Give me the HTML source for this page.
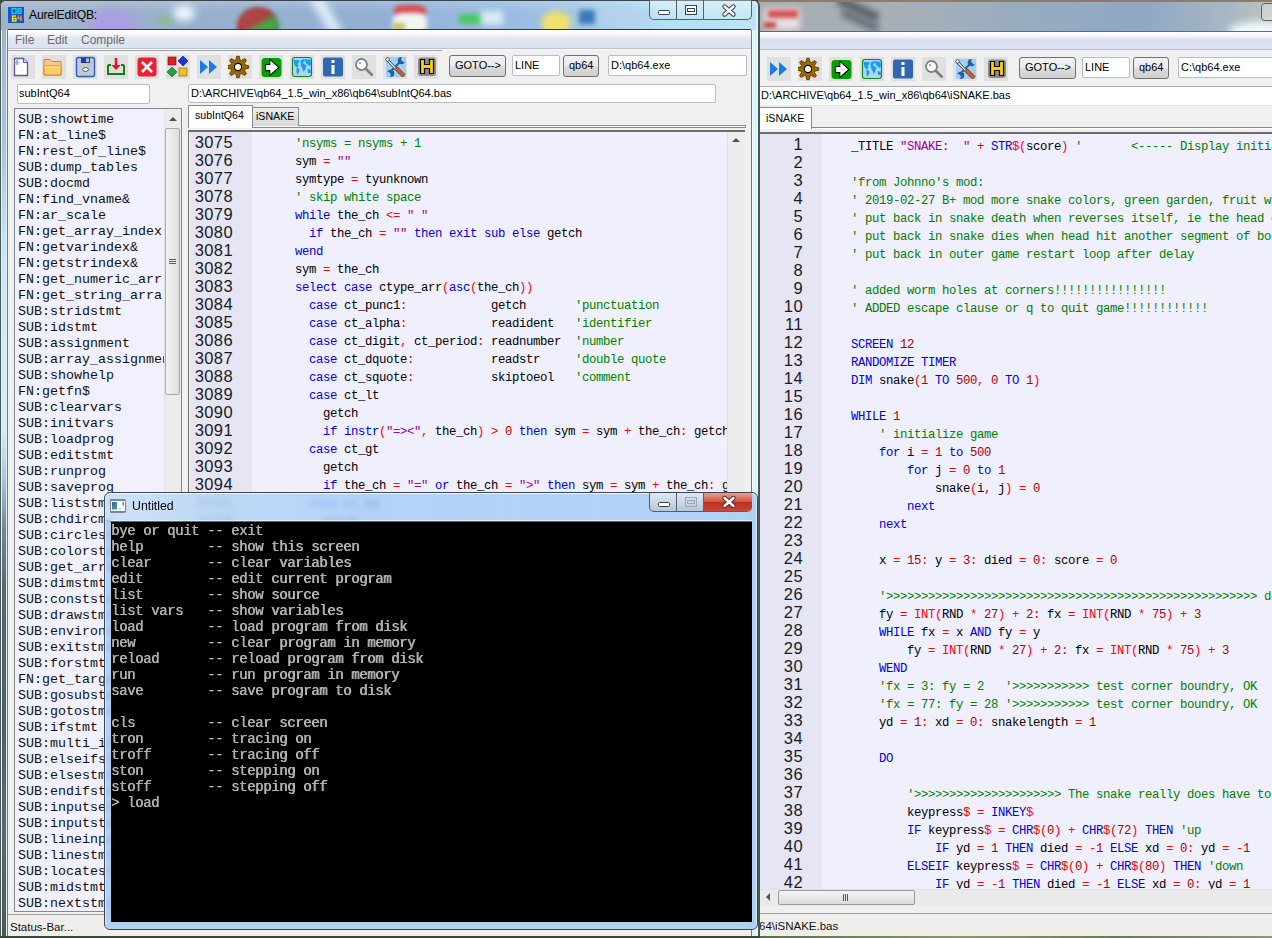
<!DOCTYPE html>
<html><head><meta charset="utf-8">
<style>
*{box-sizing:border-box}
html,body{margin:0;padding:0}
body{width:1272px;height:938px;overflow:hidden;position:relative;background:#3d4a3c;font-family:"Liberation Sans",sans-serif}
.a{position:absolute}
i{font-style:normal}
.k{color:#0000e6}.o{color:#ff0000}.n{color:#b00000}.s{color:#a000a0}.c{color:#008000}
.code{font-family:"Liberation Mono",monospace;font-size:12.3px;letter-spacing:-0.38px;line-height:18px;white-space:pre;color:#000}
.ln{font-family:"Liberation Sans",sans-serif;font-size:16.5px;line-height:18px;text-align:right;color:#1a1a1a;letter-spacing:0.4px}
.btn{position:absolute;width:24px;height:24px;background:#dedede}
.tb{position:absolute;background:#fff;border:1px solid #b8bcc4;border-radius:2px}
.pb{position:absolute;border:1px solid #707070;border-radius:3px;background:linear-gradient(#f2f2f2 0%,#ebebeb 50%,#dddddd 51%,#cfcfcf 100%)}
.menu{font-size:12px;color:#6b6b6b}
.list{font-family:"Liberation Mono",monospace;font-size:13.33px;line-height:16px;white-space:pre;color:#111}
.con{font-family:"Liberation Mono",monospace;font-size:14px;letter-spacing:-0.4px;line-height:16px;white-space:pre;color:#b0b0b0;text-shadow:0.6px 0 0 #b0b0b0}
</style></head><body>

<!-- ================= RIGHT WINDOW (behind) ================= -->
<div class="a" style="left:758px;top:0;width:514px;height:938px;background:#b7c9cf"></div>
<!-- right title bar -->
<div class="a" style="left:758px;top:0;width:514px;height:31px;background:linear-gradient(90deg,#a4acb2 0%,#a8b0b6 25%,#98acc0 50%,#90a8c4 75%,#a8b8c4 92%,#c0c4bc 100%);border-top:2px solid #8c7c6c;overflow:hidden">
  <div class="a" style="left:6px;top:6px;width:36px;height:22px;background:#e8e0e0;filter:blur(3px)"></div>
  <div class="a" style="left:10px;top:8px;width:30px;height:8px;background:#d85050;filter:blur(2px)"></div>
  <div class="a" style="left:6px;top:20px;width:12px;height:6px;background:#c04040;filter:blur(2px)"></div>
  <div class="a" style="left:78px;top:2px;width:44px;height:10px;background:#58606a;filter:blur(3px);transform:rotate(25deg)"></div>
  <div class="a" style="left:82px;top:14px;width:40px;height:9px;background:#68707a;filter:blur(3px);transform:rotate(25deg)"></div>
  <div class="a" style="left:470px;top:20px;width:60px;height:20px;border-radius:50%;background:#f4faff;filter:blur(4px)"></div>
</div>
<div class="a" style="left:1261px;top:3px;width:20px;height:18px;border:1px solid #5a6066;border-radius:4px;background:rgba(255,255,255,0.25)"></div>

<!-- right client -->
<div class="a" style="left:759px;top:31px;width:513px;height:907px;background:#f0f0f0;overflow:hidden">
  <!-- menu -->
  <div class="a" style="left:0;top:0;width:513px;height:1px;background:#5a6a80"></div>
  <div class="a" style="left:0;top:1px;width:513px;height:18px;background:linear-gradient(#ffffff 0%,#f4f5fa 25%,#d8dfee 45%,#dde2f0 100%);border-bottom:1px solid #b8c0d0"></div>
  <div class="btn" style="left:8px;top:26px;background:#e0e0e0"><svg width="24" height="24" viewBox="0 0 24 24" style="position:absolute;left:0;top:0"><path d="M3 5v14l8-7z M12 5v14l8-7z" fill="#1a7ae8"/></svg></div><div class="btn" style="left:39px;top:26px;background:#e0e0e0"><svg width="24" height="24" viewBox="0 0 24 24" style="position:absolute;left:0;top:0"><path d="M16.86 9.80 L20.73 10.81 L20.73 13.19 L16.86 14.20 L16.40 15.30 L18.43 18.75 L16.75 20.43 L13.30 18.40 L12.20 18.86 L11.19 22.73 L8.81 22.73 L7.80 18.86 L6.70 18.40 L3.25 20.43 L1.57 18.75 L3.60 15.30 L3.14 14.20 L-0.73 13.19 L-0.73 10.81 L3.14 9.80 L3.60 8.70 L1.57 5.25 L3.25 3.57 L6.70 5.60 L7.80 5.14 L8.81 1.27 L11.19 1.27 L12.20 5.14 L13.30 5.60 L16.75 3.57 L18.43 5.25 L16.40 8.70Z" fill="#9a6600" stroke="#5a3800" stroke-width="0.9" stroke-linejoin="round"/><circle cx="10" cy="12" r="3.6" fill="#fff" stroke="#000" stroke-width="1.1"/></svg></div><div class="btn" style="left:70px;top:26px;background:#e0e0e0"><svg width="24" height="24" viewBox="0 0 24 24" style="position:absolute;left:0;top:0"><rect x="2.5" y="3" width="20" height="19" rx="3.5" fill="#00a000"/><path d="M6.5 9.5h4.3v-5.3l9 8.2-9 8.2v-5h-4.3z" fill="#fff" stroke="#000" stroke-width="1.1" stroke-linejoin="miter"/></svg></div><div class="btn" style="left:101px;top:26px;background:#dedede"><svg width="24" height="24" viewBox="0 0 24 24" style="position:absolute;left:0;top:0"><rect x="2.5" y="2.5" width="19" height="19" rx="2.5" fill="#b0d4f6" stroke="#108810" stroke-width="1.1"/><path d="M3.5 5h5.5l0.5 2-2 1.5 1 2-1 2-2-1-1.5-2.5zM6.5 12.5l3 1.5-0.5 3-2 3-0.5-4zM11 5l3-1 1 2-2 1 0.5 2 3 1-1 4-2 3-1-3-1.5-3-0.5-3zM14.5 4l6 1 0.5 4-1 2-2-1-2-2zM17.5 14l3 0.5 0.5 3.5-3 0z" fill="#10a0f8"/></svg></div><div class="btn" style="left:132px;top:26px;background:#e0e0e0"><svg width="24" height="24" viewBox="0 0 24 24" style="position:absolute;left:0;top:0"><rect x="2" y="2.5" width="20" height="19" rx="2" fill="#3068b0"/><rect x="10.5" y="5" width="3" height="3" fill="#fff"/><rect x="10.5" y="10" width="3" height="9" fill="#fff"/></svg></div><div class="btn" style="left:163px;top:26px;background:#e0e0e0"><svg width="24" height="24" viewBox="0 0 24 24" style="position:absolute;left:0;top:0"><circle cx="9.5" cy="9.5" r="5.5" fill="#fff" stroke="#808080" stroke-width="1.8"/><path d="M13.5 13.5l7 7" stroke="#808080" stroke-width="2.6"/><circle cx="8" cy="8" r="1" fill="#4aa0f0"/></svg></div><div class="btn" style="left:194px;top:26px;background:#e4e2e0"><svg width="24" height="24" viewBox="0 0 24 24" style="position:absolute;left:0;top:0"><rect x="3" y="2" width="20" height="20" fill="#a0d0fa"/><path d="M6 18l12-12" stroke="#2a6098" stroke-width="2"/><circle cx="18.3" cy="5.7" r="3.6" fill="#2a6098"/><circle cx="7.7" cy="18.3" r="3.6" fill="#2a6098"/><path d="M19 2l4 0 0 4-2.5 1.2-2.5-2.5zM7 22l-4 0 0-4 2.5-1.2 2.5 2.5z" fill="#a0d0fa"/><path d="M4 4.5l8.5 9" stroke="#303030" stroke-width="2.6" stroke-linecap="round"/><path d="M4 4.5l8.5 9" stroke="#fff" stroke-width="1.2" stroke-linecap="round"/><circle cx="4.5" cy="4.5" r="1.8" fill="#fff" stroke="#303030" stroke-width="0.8"/><path d="M12 14.5l2.5-2.5 7.5 7.5-2.5 2.5z" fill="#f06010" stroke="#404040" stroke-width="1"/><path d="M15 14.5l4.5 4.5M14 15.5l4.5 4.5" stroke="#a83808" stroke-width="0.6" stroke-dasharray="1 1"/></svg></div><div class="btn" style="left:225px;top:26px;background:#e0e0e0"><svg width="24" height="24" viewBox="0 0 24 24" style="position:absolute;left:0;top:0"><rect x="4" y="2.5" width="18" height="18.5" rx="3" fill="#8a8a8a"/><path d="M6.5 4.5h4v5h5v-5h4v14h-4v-5h-5v5h-4z" fill="#ffd000" stroke="#000" stroke-width="1.2" stroke-linejoin="miter"/></svg></div><div class="pb" style="left:260px;top:26px;width:57px;height:22px"></div><div class="a" style="left:266px;top:30px;font-size:11px;color:#000;white-space:pre">GOTO--&gt;</div><div class="tb" style="left:323px;top:26px;width:48px;height:21px"></div><div class="a" style="left:326px;top:30px;font-size:11px;color:#000">LINE</div><div class="pb" style="left:374px;top:26px;width:36px;height:22px"></div><div class="a" style="left:380px;top:30px;font-size:11px;color:#000">qb64</div><div class="tb" style="left:419px;top:26px;width:200px;height:21px"></div><div class="a" style="left:422px;top:30px;font-size:11px;color:#000;white-space:pre">C:\qb64.exe</div>
  <!-- path field -->
  <div class="a" style="left:0;top:55px;width:513px;height:20px;background:#fff;border-top:1px solid #a8acb4;border-bottom:1px solid #dde3ea"></div>
  <div class="a" style="left:2px;top:58px;font-size:11px;color:#000;white-space:pre">D:\ARCHIVE\qb64_1.5_win_x86\qb64\iSNAKE.bas</div>
  <!-- tab -->
  <div class="a" style="left:0;top:96px;width:513px;height:2px;background:#8a8a8a;border-bottom:1px solid #fff"></div>
  <div class="a" style="left:0;top:76px;width:53px;height:22px;background:#fff;border:1px solid #8a8a8a;border-bottom:none"></div>
  <div class="a" style="left:7px;top:81px;font-size:10.6px;color:#000">iSNAKE</div>
  <!-- code area -->
  <div class="a" style="left:0;top:101px;width:513px;height:757px;background:#f0effd;border-top:2px solid #6d6d6d;border-left:1px solid #6d6d6d;overflow:hidden">
    <div class="a" style="left:0;top:0;width:62px;height:757px;background:#e6e5f3"></div>
    <div class="a ln" style="left:0;top:1px;width:43px"><div>1</div><div>2</div><div>3</div><div>4</div><div>5</div><div>6</div><div>7</div><div>8</div><div>9</div><div>10</div><div>11</div><div>12</div><div>13</div><div>14</div><div>15</div><div>16</div><div>17</div><div>18</div><div>19</div><div>20</div><div>21</div><div>22</div><div>23</div><div>24</div><div>25</div><div>26</div><div>27</div><div>28</div><div>29</div><div>30</div><div>31</div><div>32</div><div>33</div><div>34</div><div>35</div><div>36</div><div>37</div><div>38</div><div>39</div><div>40</div><div>41</div><div>42</div><div>43</div></div>
    <div class="a code" style="left:63px;top:3.5px"><div>    _TITLE <i class=s>&quot;SNAKE:  &quot;</i> <i class=o>+</i> <i class=k>STR</i><i class=o>$</i><i class=o>(</i>score<i class=o>)</i> <i class=c>&#x27;       &lt;----- Display initial score in title</i></div><div>&nbsp;</div><div>    <i class=c>&#x27;from Johnno&#x27;s mod:</i></div><div>    <i class=c>&#x27; 2019-02-27 B+ mod more snake colors, green garden, fruit when eaten</i></div><div>    <i class=c>&#x27; put back in snake death when reverses itself, ie the head can&#x27;t go</i></div><div>    <i class=c>&#x27; put back in snake dies when head hit another segment of body</i></div><div>    <i class=c>&#x27; put back in outer game restart loop after delay</i></div><div>&nbsp;</div><div>    <i class=c>&#x27; added worm holes at corners!!!!!!!!!!!!!!!!</i></div><div>    <i class=c>&#x27; ADDED escape clause or q to quit game!!!!!!!!!!!!</i></div><div>&nbsp;</div><div>    <i class=k>SCREEN</i> <i class=n>12</i></div><div>    <i class=k>RANDOMIZE</i> <i class=k>TIMER</i></div><div>    <i class=k>DIM</i> snake<i class=o>(</i><i class=n>1</i> <i class=k>TO</i> <i class=n>500</i><i class=o>,</i> <i class=n>0</i> <i class=k>TO</i> <i class=n>1</i><i class=o>)</i></div><div>&nbsp;</div><div>    <i class=k>WHILE</i> <i class=n>1</i></div><div>        <i class=c>&#x27; initialize game</i></div><div>        <i class=k>for</i> i <i class=o>=</i> <i class=n>1</i> <i class=k>to</i> <i class=n>500</i></div><div>            <i class=k>for</i> j <i class=o>=</i> <i class=n>0</i> <i class=k>to</i> <i class=n>1</i></div><div>                snake<i class=o>(</i>i<i class=o>,</i> j<i class=o>)</i> <i class=o>=</i> <i class=n>0</i></div><div>            <i class=k>next</i></div><div>        <i class=k>next</i></div><div>&nbsp;</div><div>        x <i class=o>=</i> <i class=n>15</i><i class=o>:</i> y <i class=o>=</i> <i class=n>3</i><i class=o>:</i> died <i class=o>=</i> <i class=n>0</i><i class=o>:</i> score <i class=o>=</i> <i class=n>0</i></div><div>&nbsp;</div><div>        <i class=c>&#x27;&gt;&gt;&gt;&gt;&gt;&gt;&gt;&gt;&gt;&gt;&gt;&gt;&gt;&gt;&gt;&gt;&gt;&gt;&gt;&gt;&gt;&gt;&gt;&gt;&gt;&gt;&gt;&gt;&gt;&gt;&gt;&gt;&gt;&gt;&gt;&gt;&gt;&gt;&gt;&gt;&gt;&gt;&gt;&gt;&gt;&gt;&gt;&gt;&gt;&gt;&gt;&gt;&gt; delay</i></div><div>        fy <i class=o>=</i> <i class=o>INT</i><i class=o>(</i>RND <i class=o>*</i> <i class=n>27</i><i class=o>)</i> <i class=o>+</i> <i class=n>2</i><i class=o>:</i> fx <i class=o>=</i> <i class=o>INT</i><i class=o>(</i>RND <i class=o>*</i> <i class=n>75</i><i class=o>)</i> <i class=o>+</i> <i class=n>3</i></div><div>        <i class=k>WHILE</i> fx <i class=o>=</i> x <i class=k>AND</i> fy <i class=o>=</i> y</div><div>            fy <i class=o>=</i> <i class=o>INT</i><i class=o>(</i>RND <i class=o>*</i> <i class=n>27</i><i class=o>)</i> <i class=o>+</i> <i class=n>2</i><i class=o>:</i> fx <i class=o>=</i> <i class=o>INT</i><i class=o>(</i>RND <i class=o>*</i> <i class=n>75</i><i class=o>)</i> <i class=o>+</i> <i class=n>3</i></div><div>        <i class=k>WEND</i></div><div>        <i class=c>&#x27;fx = 3: fy = 2   &#x27;&gt;&gt;&gt;&gt;&gt;&gt;&gt;&gt;&gt;&gt;&gt; test corner boundry, OK</i></div><div>        <i class=c>&#x27;fx = 77: fy = 28 &#x27;&gt;&gt;&gt;&gt;&gt;&gt;&gt;&gt;&gt;&gt;&gt; test corner boundry, OK</i></div><div>        yd <i class=o>=</i> <i class=n>1</i><i class=o>:</i> xd <i class=o>=</i> <i class=n>0</i><i class=o>:</i> snakelength <i class=o>=</i> <i class=n>1</i></div><div>&nbsp;</div><div>        <i class=k>DO</i></div><div>&nbsp;</div><div>            <i class=c>&#x27;&gt;&gt;&gt;&gt;&gt;&gt;&gt;&gt;&gt;&gt;&gt;&gt;&gt;&gt;&gt;&gt;&gt;&gt;&gt;&gt;&gt; The snake really does have to move</i></div><div>            keypress<i class=o>$</i> <i class=o>=</i> <i class=k>INKEY</i><i class=o>$</i></div><div>            <i class=k>IF</i> keypress<i class=o>$</i> <i class=o>=</i> <i class=k>CHR</i><i class=o>$</i><i class=o>(</i><i class=n>0</i><i class=o>)</i> <i class=o>+</i> <i class=k>CHR</i><i class=o>$</i><i class=o>(</i><i class=n>72</i><i class=o>)</i> <i class=k>THEN</i> <i class=c>&#x27;up</i></div><div>                <i class=k>IF</i> yd <i class=o>=</i> <i class=n>1</i> <i class=k>THEN</i> died <i class=o>=</i> <i class=o>-</i><i class=n>1</i> <i class=k>ELSE</i> xd <i class=o>=</i> <i class=n>0</i><i class=o>:</i> yd <i class=o>=</i> <i class=o>-</i><i class=n>1</i></div><div>            <i class=k>ELSEIF</i> keypress<i class=o>$</i> <i class=o>=</i> <i class=k>CHR</i><i class=o>$</i><i class=o>(</i><i class=n>0</i><i class=o>)</i> <i class=o>+</i> <i class=k>CHR</i><i class=o>$</i><i class=o>(</i><i class=n>80</i><i class=o>)</i> <i class=k>THEN</i> <i class=c>&#x27;down</i></div><div>                <i class=k>IF</i> yd <i class=o>=</i> <i class=o>-</i><i class=n>1</i> <i class=k>THEN</i> died <i class=o>=</i> <i class=o>-</i><i class=n>1</i> <i class=k>ELSE</i> xd <i class=o>=</i> <i class=n>0</i><i class=o>:</i> yd <i class=o>=</i> <i class=n>1</i></div><div>            <i class=k>ELSEIF</i> keypress<i class=o>$</i> <i class=o>=</i> <i class=k>CHR</i><i class=o>$</i><i class=o>(</i><i class=n>0</i><i class=o>)</i> <i class=o>+</i> <i class=k>CHR</i><i class=o>$</i><i class=o>(</i><i class=n>75</i><i class=o>)</i> <i class=k>THEN</i> <i class=c>&#x27;left</i></div></div>
  </div>
  <!-- hscroll -->
  <div class="a" style="left:0;top:858px;width:513px;height:17px;background:#eaeaea;border-top:1px solid #e0e0e0"></div>
  <div class="a" style="left:7px;top:862px;width:0;height:0;border-top:4px solid transparent;border-bottom:4px solid transparent;border-right:4px solid #505050"></div>
  <div class="a" style="left:19px;top:859px;width:137px;height:15px;border:1px solid #9a9a9a;border-radius:2px;background:linear-gradient(#f4f4f4,#dcdcdc)"></div>
  <div class="a" style="left:84px;top:863px;width:1px;height:7px;background:#555;box-shadow:2px 0 0 #555,4px 0 0 #555"></div>
  <div class="a" style="left:0;top:882px;width:513px;height:1px;background:#a0a0a0"></div>
  <div class="a" style="left:0;top:883px;width:513px;height:24px;background:#f0eeeb"></div>
  <div class="a" style="left:0;top:889px;font-size:11.5px;color:#111;white-space:pre">64\iSNAKE.bas</div>
</div>

<div class="a" style="left:759px;top:936px;width:513px;height:2px;background:linear-gradient(90deg,#5a7048,#8a9868 40%,#6a7a50 70%,#8c9870)"></div>
<!-- ================= LEFT WINDOW ================= -->
<div class="a" style="left:0;top:0;width:760px;height:938px;background:#d8f2f6;border-left:1px solid #4a5656;border-right:2px solid #4a5558;border-top:1px solid #3a4448;border-radius:6px 6px 0 0"></div>
<div class="a" style="left:1px;top:28px;width:6px;height:910px;background:linear-gradient(180deg,#9cb4cc 0px,#a8c4dc 120px,#c4e8f2 220px,#ccf2f6 400px,#a8c8d8 450px,#708898 500px,#56666e 560px,#4e5e66 700px,#586a70 800px,#44544c 938px);border-left:1px solid #e8f4f8;border-right:1px solid #e8f4f8"></div>
<div class="a" style="left:752px;top:28px;width:6px;height:910px;background:#d8f6fa;border-left:1px solid #f4fcff;border-right:1px solid #f4fcff"></div>
<!-- title glass -->
<div class="a" style="left:1px;top:1px;width:755px;height:29px;border-radius:6px 6px 0 0;background:linear-gradient(90deg,#a2b4c8 0%,#98b0cc 25%,#92b0d4 50%,#9cc0e4 72%,#b4e0f4 88%,#bce4f4 100%);overflow:hidden">
  <div class="a" style="left:0;top:0;width:755px;height:12px;background:linear-gradient(rgba(255,255,255,0.18),rgba(255,255,255,0))"></div>
  <div class="a" style="left:88px;top:8px;width:48px;height:34px;border-radius:50%;background:#ac9ce4;filter:blur(5px)"></div>
  <div class="a" style="left:172px;top:4px;width:22px;height:16px;border-radius:50%;background:#eef8ff;filter:blur(4px)"></div>
  <div class="a" style="left:158px;top:16px;width:14px;height:8px;border-radius:50%;background:#80c080;filter:blur(3px)"></div>
  <div class="a" style="left:236px;top:6px;width:42px;height:40px;border-radius:50%;background:linear-gradient(150deg,#c05050 0%,#b04040 40%,#48a848 52%,#40a040 100%);box-shadow:inset 0 0 5px rgba(60,30,30,0.6);filter:blur(2px)"></div>
  <div class="a" style="left:305px;top:-4px;width:40px;height:36px;background:linear-gradient(60deg,rgba(220,240,255,0) 30%,#e8f6ff 50%,rgba(220,240,255,0) 70%);filter:blur(3px)"></div>
  <div class="a" style="left:393px;top:4px;width:32px;height:10px;border-radius:40% 40% 10% 10%;background:#d84848;filter:blur(2px)"></div>
  <div class="a" style="left:392px;top:12px;width:34px;height:20px;border-radius:30%;background:#f4f4f0;filter:blur(2.5px)"></div>
  <div class="a" style="left:392px;top:22px;width:12px;height:8px;background:#c8c070;filter:blur(2px)"></div>
  <div class="a" style="left:457px;top:13px;width:26px;height:10px;border-radius:5px;background:#48c868;filter:blur(2px)"></div>
  <div class="a" style="left:480px;top:10px;width:22px;height:14px;background:#d8ecf4;filter:blur(3px)"></div>
  <div class="a" style="left:540px;top:10px;width:30px;height:24px;border-radius:50%;background:#f0e070;filter:blur(3px)"></div>
  <div class="a" style="left:578px;top:9px;width:16px;height:14px;background:#3a78b8;filter:blur(2.5px)"></div>
  <div class="a" style="left:600px;top:10px;width:50px;height:12px;background:#b8d0ec;filter:blur(4px)"></div>
</div>
<!-- app icon -->
<svg class="a" style="left:8px;top:7px" width="16" height="16" viewBox="0 0 16 16">
<rect width="16" height="16" fill="#1458c8"/>
<g fill="none" stroke="#28d0f0" stroke-width="1.2"><rect x="4" y="1.6" width="4" height="4.8"/><path d="M10 1.6h3v4.8h-3zM10 4h3"/></g><rect x="7.5" y="5.6" width="1" height="1" fill="#28d0f0"/>
<path d="M8 9h-3.5v5h3.5v-2.5h-3.5" fill="none" stroke="#f8e020" stroke-width="1.3"/>
<path d="M10.2 8.5v3h3M13 8.5v5.5" fill="none" stroke="#e8a040" stroke-width="1.3"/>
</svg>
<div class="a" style="left:29px;top:8px;font-size:12.2px;letter-spacing:-0.2px;color:#000;white-space:pre">AurelEditQB:</div>
<!-- caption buttons -->
<div class="a" style="left:649px;top:0;width:103px;height:20px;border:1px solid #52606a;border-top:none;border-radius:0 0 5px 5px;background:linear-gradient(rgba(255,255,255,0.35),rgba(255,255,255,0.15))"></div>
<div class="a" style="left:676px;top:0;width:1px;height:19px;background:#52606a"></div>
<div class="a" style="left:703px;top:0;width:1px;height:19px;background:#52606a"></div>
<svg class="a" style="left:649px;top:0" width="104" height="20" viewBox="0 0 104 20">
<rect x="9.5" y="10.5" width="11" height="4" rx="1" fill="#fff" stroke="#3a4048" stroke-width="1"/>
<rect x="36.5" y="5.5" width="11" height="9" fill="#fff" stroke="#3a4048" stroke-width="1"/><rect x="38.5" y="8.5" width="7" height="3" fill="none" stroke="#3a4048" stroke-width="1"/>
<path d="M75.5 6.5L84.5 14.5M84.5 6.5L75.5 14.5" stroke="#3a4048" stroke-width="4.4" stroke-linecap="round"/><path d="M75.5 6.5L84.5 14.5M84.5 6.5L75.5 14.5" stroke="#fff" stroke-width="2.4" stroke-linecap="round"/>
</svg>
<!-- left client -->
<div class="a" style="left:7px;top:30px;width:1px;height:906px;background:#6a7880"></div><div class="a" style="left:751px;top:30px;width:1px;height:906px;background:#6a7880"></div>
<div class="a" style="left:8px;top:29px;width:743px;height:1px;background:#2c3a58"></div>
<div class="a" style="left:8px;top:30px;width:743px;height:906px;background:#f0f0f0;overflow:hidden">
  <!-- menu -->
  <div class="a" style="left:0;top:0;width:743px;height:19px;background:linear-gradient(#ffffff 0%,#f4f5fa 25%,#e2e6f2 45%,#dde2f0 100%);border-bottom:1px solid #bcc4d4"></div>
  <div class="a" style="left:0;top:19px;width:743px;height:1px;background:#fafafa"></div>
  <div class="a" style="left:0;top:20px;width:434px;height:1px;background:#a0a4ac"></div>
  <div class="a menu" style="left:7px;top:3px">File</div>
  <div class="a menu" style="left:39px;top:3px">Edit</div>
  <div class="a menu" style="left:73px;top:3px">Compile</div>
  <div class="btn" style="left:3px;top:25px;background:#e0e0e0"><svg width="24" height="24" viewBox="0 0 24 24" style="position:absolute;left:0;top:0"><path d="M3.5 3.5h9l4 4v13h-13z" fill="#fff" stroke="#5a5a9a" stroke-width="1.3"/><path d="M12.5 3.5v4h4" fill="#dde" stroke="#5a5a9a" stroke-width="1"/><path d="M6 5v5M3.5 7.5h5" stroke="#7ab0e8" stroke-width="1.6"/></svg></div><div class="btn" style="left:34px;top:25px;background:#e0e0e0"><svg width="24" height="24" viewBox="0 0 24 24" style="position:absolute;left:0;top:0"><path d="M2 4.5h6l2 2h9v13.5h-17z" fill="#f8c890" stroke="#e08020" stroke-width="1"/><path d="M2 11h17v9h-17z" fill="#fcd060" stroke="#e08020" stroke-width="1"/><path d="M2 12h17" stroke="#fff0a0" stroke-width="1"/></svg></div><div class="btn" style="left:65px;top:25px;background:#e0e0e0"><svg width="24" height="24" viewBox="0 0 24 24" style="position:absolute;left:0;top:0"><rect x="3.5" y="2.5" width="18" height="19" rx="2" fill="#c8c8cc" stroke="#2060d0" stroke-width="1.4"/><rect x="8" y="3" width="9" height="5" fill="#2040a0"/><rect x="13" y="3.5" width="3" height="3.5" fill="#c0c0c0"/><ellipse cx="12.5" cy="14.5" rx="3" ry="2" fill="#fff" stroke="#2060d0" stroke-width="1"/></svg></div><div class="btn" style="left:96px;top:25px;background:#e0e0e0"><svg width="24" height="24" viewBox="0 0 24 24" style="position:absolute;left:0;top:0"><path d="M4 10v9h16v-9" fill="none" stroke="#108010" stroke-width="2"/><path d="M4 10h3M17 10h3" stroke="#108010" stroke-width="2"/><path d="M12 3v8" stroke="#ee1010" stroke-width="2.4"/><path d="M7.5 10l4.5 5 4.5-5z" fill="#ee1010"/></svg></div><div class="btn" style="left:127px;top:25px;background:#e0e0e0"><svg width="24" height="24" viewBox="0 0 24 24" style="position:absolute;left:0;top:0"><rect x="2.5" y="2.5" width="19" height="19" rx="3" fill="#ee2030"/><path d="M7 7l10 10M17 7l-10 10" stroke="#fff" stroke-width="2.6"/></svg></div><div class="btn" style="left:158px;top:25px;background:#e0e0e0"><svg width="24" height="24" viewBox="0 0 24 24" style="position:absolute;left:0;top:0"><rect x="2" y="2" width="8" height="8" fill="#e02020" stroke="#701010" stroke-width="0.6"/><path d="M17 1l5 5-5 5-5-5z" fill="#2030e0" stroke="#101070" stroke-width="0.6"/><path d="M6 12l5 5-5 5-5-5z" fill="#20a040" stroke="#105020" stroke-width="0.6"/><rect x="13" y="13" width="8" height="8" fill="#f0c020" stroke="#806010" stroke-width="0.6"/></svg></div><div class="btn" style="left:189px;top:25px;background:#e0e0e0"><svg width="24" height="24" viewBox="0 0 24 24" style="position:absolute;left:0;top:0"><path d="M3 5v14l8-7z M12 5v14l8-7z" fill="#1a7ae8"/></svg></div><div class="btn" style="left:220px;top:25px;background:#e0e0e0"><svg width="24" height="24" viewBox="0 0 24 24" style="position:absolute;left:0;top:0"><path d="M16.86 9.80 L20.73 10.81 L20.73 13.19 L16.86 14.20 L16.40 15.30 L18.43 18.75 L16.75 20.43 L13.30 18.40 L12.20 18.86 L11.19 22.73 L8.81 22.73 L7.80 18.86 L6.70 18.40 L3.25 20.43 L1.57 18.75 L3.60 15.30 L3.14 14.20 L-0.73 13.19 L-0.73 10.81 L3.14 9.80 L3.60 8.70 L1.57 5.25 L3.25 3.57 L6.70 5.60 L7.80 5.14 L8.81 1.27 L11.19 1.27 L12.20 5.14 L13.30 5.60 L16.75 3.57 L18.43 5.25 L16.40 8.70Z" fill="#9a6600" stroke="#5a3800" stroke-width="0.9" stroke-linejoin="round"/><circle cx="10" cy="12" r="3.6" fill="#fff" stroke="#000" stroke-width="1.1"/></svg></div><div class="btn" style="left:251px;top:25px;background:#e0e0e0"><svg width="24" height="24" viewBox="0 0 24 24" style="position:absolute;left:0;top:0"><rect x="2.5" y="3" width="20" height="19" rx="3.5" fill="#00a000"/><path d="M6.5 9.5h4.3v-5.3l9 8.2-9 8.2v-5h-4.3z" fill="#fff" stroke="#000" stroke-width="1.1" stroke-linejoin="miter"/></svg></div><div class="btn" style="left:282px;top:25px;background:#dedede"><svg width="24" height="24" viewBox="0 0 24 24" style="position:absolute;left:0;top:0"><rect x="2.5" y="2.5" width="19" height="19" rx="2.5" fill="#b0d4f6" stroke="#108810" stroke-width="1.1"/><path d="M3.5 5h5.5l0.5 2-2 1.5 1 2-1 2-2-1-1.5-2.5zM6.5 12.5l3 1.5-0.5 3-2 3-0.5-4zM11 5l3-1 1 2-2 1 0.5 2 3 1-1 4-2 3-1-3-1.5-3-0.5-3zM14.5 4l6 1 0.5 4-1 2-2-1-2-2zM17.5 14l3 0.5 0.5 3.5-3 0z" fill="#10a0f8"/></svg></div><div class="btn" style="left:313px;top:25px;background:#e0e0e0"><svg width="24" height="24" viewBox="0 0 24 24" style="position:absolute;left:0;top:0"><rect x="2" y="2.5" width="20" height="19" rx="2" fill="#3068b0"/><rect x="10.5" y="5" width="3" height="3" fill="#fff"/><rect x="10.5" y="10" width="3" height="9" fill="#fff"/></svg></div><div class="btn" style="left:344px;top:25px;background:#e0e0e0"><svg width="24" height="24" viewBox="0 0 24 24" style="position:absolute;left:0;top:0"><circle cx="9.5" cy="9.5" r="5.5" fill="#fff" stroke="#808080" stroke-width="1.8"/><path d="M13.5 13.5l7 7" stroke="#808080" stroke-width="2.6"/><circle cx="8" cy="8" r="1" fill="#4aa0f0"/></svg></div><div class="btn" style="left:375px;top:25px;background:#e4e2e0"><svg width="24" height="24" viewBox="0 0 24 24" style="position:absolute;left:0;top:0"><rect x="3" y="2" width="20" height="20" fill="#a0d0fa"/><path d="M6 18l12-12" stroke="#2a6098" stroke-width="2"/><circle cx="18.3" cy="5.7" r="3.6" fill="#2a6098"/><circle cx="7.7" cy="18.3" r="3.6" fill="#2a6098"/><path d="M19 2l4 0 0 4-2.5 1.2-2.5-2.5zM7 22l-4 0 0-4 2.5-1.2 2.5 2.5z" fill="#a0d0fa"/><path d="M4 4.5l8.5 9" stroke="#303030" stroke-width="2.6" stroke-linecap="round"/><path d="M4 4.5l8.5 9" stroke="#fff" stroke-width="1.2" stroke-linecap="round"/><circle cx="4.5" cy="4.5" r="1.8" fill="#fff" stroke="#303030" stroke-width="0.8"/><path d="M12 14.5l2.5-2.5 7.5 7.5-2.5 2.5z" fill="#f06010" stroke="#404040" stroke-width="1"/><path d="M15 14.5l4.5 4.5M14 15.5l4.5 4.5" stroke="#a83808" stroke-width="0.6" stroke-dasharray="1 1"/></svg></div><div class="btn" style="left:406px;top:25px;background:#e0e0e0"><svg width="24" height="24" viewBox="0 0 24 24" style="position:absolute;left:0;top:0"><rect x="4" y="2.5" width="18" height="18.5" rx="3" fill="#8a8a8a"/><path d="M6.5 4.5h4v5h5v-5h4v14h-4v-5h-5v5h-4z" fill="#ffd000" stroke="#000" stroke-width="1.2" stroke-linejoin="miter"/></svg></div><div class="pb" style="left:441px;top:25px;width:57px;height:22px"></div><div class="a" style="left:447px;top:29px;font-size:11px;color:#000;white-space:pre">GOTO--&gt;</div><div class="tb" style="left:504px;top:25px;width:48px;height:21px"></div><div class="a" style="left:507px;top:29px;font-size:11px;color:#000">LINE</div><div class="pb" style="left:555px;top:25px;width:36px;height:22px"></div><div class="a" style="left:561px;top:29px;font-size:11px;color:#000">qb64</div><div class="tb" style="left:600px;top:25px;width:139px;height:21px"></div><div class="a" style="left:603px;top:29px;font-size:11px;color:#000;white-space:pre">D:\qb64.exe</div>
  <!-- name box -->
  <div class="tb" style="left:9px;top:54px;width:133px;height:20px"></div>
  <div class="a" style="left:11px;top:57px;font-size:11px;color:#000">subIntQ64</div>
  <!-- path box -->
  <div class="tb" style="left:180px;top:54px;width:528px;height:19px"></div>
  <div class="a" style="left:183px;top:57px;font-size:11px;color:#000;white-space:pre">D:\ARCHIVE\qb64_1.5_win_x86\qb64\subIntQ64.bas</div>
  <!-- listbox -->
  <div class="a" style="left:6px;top:78px;width:168px;height:804px;background:#f0f0fe;border:1px solid #828790;overflow:hidden">
    <div class="a list" style="left:3px;top:3px"><div>SUB:showtime</div><div>FN:at_line$</div><div>FN:rest_of_line$</div><div>SUB:dump_tables</div><div>SUB:docmd</div><div>FN:find_vname&amp;</div><div>FN:ar_scale</div><div>FN:get_array_index</div><div>FN:getvarindex&amp;</div><div>FN:getstrindex&amp;</div><div>FN:get_numeric_arr</div><div>FN:get_string_arra</div><div>SUB:stridstmt</div><div>SUB:idstmt</div><div>SUB:assignment</div><div>SUB:array_assignmen</div><div>SUB:showhelp</div><div>FN:getfn$</div><div>SUB:clearvars</div><div>SUB:initvars</div><div>SUB:loadprog</div><div>SUB:editstmt</div><div>SUB:runprog</div><div>SUB:saveprog</div><div>SUB:liststmt</div><div>SUB:chdircmd</div><div>SUB:circlestmt</div><div>SUB:colorstmt</div><div>SUB:get_array</div><div>SUB:dimstmt</div><div>SUB:conststmt</div><div>SUB:drawstmt</div><div>SUB:environstmt</div><div>SUB:exitstmt</div><div>SUB:forstmt</div><div>FN:get_target</div><div>SUB:gosubstmt</div><div>SUB:gotostmt</div><div>SUB:ifstmt</div><div>SUB:multi_if</div><div>SUB:elseifstmt</div><div>SUB:elsestmt</div><div>SUB:endifstmt</div><div>SUB:inputsetup</div><div>SUB:inputstmt</div><div>SUB:lineinputstmt</div><div>SUB:linestmt</div><div>SUB:locatestmt</div><div>SUB:midstmt</div><div>SUB:nextstmt</div></div>
    <div class="a" style="left:149px;top:0;width:17px;height:803px;background:#ececec;border-left:1px solid #e4e4e4"></div>
    <div class="a" style="left:154px;top:8px;width:0;height:0;border-left:4px solid transparent;border-right:4px solid transparent;border-bottom:4px solid #505050"></div>
    <div class="a" style="left:150px;top:19px;width:15px;height:267px;border:1px solid #a8a8a8;border-radius:2px;background:linear-gradient(90deg,#f4f4f4,#dedede)"></div>
    <div class="a" style="left:154px;top:150px;width:7px;height:1px;background:#606060;box-shadow:0 2px 0 #606060,0 4px 0 #606060"></div>
  </div>
  <!-- tabs -->
  <div class="a" style="left:180px;top:95px;width:558px;height:3px;border:1px solid #8a8a8a;border-left:none;background:#f8f8f8"></div>
  <div class="a" style="left:180px;top:75px;width:65px;height:23px;background:#fff;border:1px solid #8a8a8a;border-bottom:none"></div>
  <div class="a" style="left:187px;top:79px;font-size:10.6px;color:#000">subIntQ64</div>
  <div class="a" style="left:244px;top:77px;width:47px;height:19px;background:linear-gradient(#ececec,#d8d8d8);border:1px solid #8a8a8a;border-bottom:none"></div>
  <div class="a" style="left:248px;top:80px;font-size:10.6px;color:#000">iSNAKE</div>
  <!-- code area -->
  <div class="a" style="left:180px;top:100px;width:557px;height:800px;background:#f0effd;border-top:2px solid #6d6d6d;border-left:1px solid #6d6d6d;overflow:hidden">
    <div class="a" style="left:1px;top:0;width:62px;height:800px;background:#e6e5f3"></div>
    <div class="a ln" style="left:0;top:1px;width:44px"><div>3075</div><div>3076</div><div>3077</div><div>3078</div><div>3079</div><div>3080</div><div>3081</div><div>3082</div><div>3083</div><div>3084</div><div>3085</div><div>3086</div><div>3087</div><div>3088</div><div>3089</div><div>3090</div><div>3091</div><div>3092</div><div>3093</div><div>3094</div><div>3095</div><div>3096</div></div>
    <div class="a code" style="left:64px;top:3px"><div>      <i class=c>&#x27;nsyms = nsyms + 1</i></div><div>      sym <i class=o>=</i> <i class=s>&quot;&quot;</i></div><div>      symtype <i class=o>=</i> tyunknown</div><div>      <i class=c>&#x27; skip white space</i></div><div>      <i class=k>while</i> the_ch <i class=o>&lt;</i><i class=o>=</i> <i class=s>&quot; &quot;</i></div><div>        <i class=k>if</i> the_ch <i class=o>=</i> <i class=s>&quot;&quot;</i> <i class=k>then</i> <i class=k>exit</i> <i class=k>sub</i> <i class=k>else</i> getch</div><div>      <i class=k>wend</i></div><div>      sym <i class=o>=</i> the_ch</div><div>      <i class=k>select</i> <i class=k>case</i> ctype_arr<i class=o>(</i><i class=k>asc</i><i class=o>(</i>the_ch<i class=o>)</i><i class=o>)</i></div><div>        <i class=k>case</i> ct_punc1<i class=o>:</i>            getch       <i class=c>&#x27;punctuation</i></div><div>        <i class=k>case</i> ct_alpha<i class=o>:</i>            readident   <i class=c>&#x27;identifier</i></div><div>        <i class=k>case</i> ct_digit<i class=o>,</i> ct_period<i class=o>:</i> readnumber  <i class=c>&#x27;number</i></div><div>        <i class=k>case</i> ct_dquote<i class=o>:</i>           readstr     <i class=c>&#x27;double quote</i></div><div>        <i class=k>case</i> ct_squote<i class=o>:</i>           skiptoeol   <i class=c>&#x27;comment</i></div><div>        <i class=k>case</i> ct_lt</div><div>          getch</div><div>          <i class=k>if</i> <i class=k>instr</i><i class=o>(</i><i class=s>&quot;=&gt;&lt;&quot;</i><i class=o>,</i> the_ch<i class=o>)</i> <i class=o>&gt;</i> <i class=n>0</i> <i class=k>then</i> sym <i class=o>=</i> sym <i class=o>+</i> the_ch<i class=o>:</i> getch</div><div>        <i class=k>case</i> ct_gt</div><div>          getch</div><div>          <i class=k>if</i> the_ch <i class=o>=</i> <i class=s>&quot;=&quot;</i> <i class=k>or</i> the_ch <i class=o>=</i> <i class=s>&quot;&gt;&quot;</i> <i class=k>then</i> sym <i class=o>=</i> sym <i class=o>+</i> the_ch<i class=o>:</i> getch</div><div>        <i class=k>case</i> ct_eq</div><div>          getch</div></div>
    <div class="a" style="left:538px;top:0;width:18px;height:800px;background:#ececec;border-left:1px solid #e0e0e0"></div>
    <div class="a" style="left:543px;top:6px;width:0;height:0;border-left:4px solid transparent;border-right:4px solid transparent;border-bottom:4px solid #505050"></div>
  </div>
  <!-- status -->
  <div class="a" style="left:0;top:884px;width:743px;height:1px;background:#a0a0a0"></div>
  <div class="a" style="left:0;top:885px;width:743px;height:22px;background:#f0eeeb"></div>
  <div class="a" style="left:2px;top:891px;font-size:11.5px;color:#111">Status-Bar...</div>
</div>

<div class="a" style="left:0;top:936px;width:760px;height:2px;background:#3a4838"></div>
<!-- ================= CONSOLE WINDOW ================= -->
<div class="a" style="left:104px;top:492px;width:654px;height:438px;background:rgba(162,202,246,0.8);backdrop-filter:blur(2.5px);border:1px solid #3c4650;border-radius:6px 6px 6px 6px;box-shadow:inset 0 1px 0 rgba(255,255,255,0.8), inset 1px 0 0 rgba(255,255,255,0.5), inset -1px 0 0 rgba(255,255,255,0.5)"></div>
<div class="a" style="left:105px;top:494px;width:652px;height:26px;border-radius:5px 5px 0 0;background:linear-gradient(90deg,rgba(230,242,252,0.5) 0%,rgba(220,236,250,0.4) 12%,rgba(190,215,240,0.15) 40%,rgba(180,208,238,0.05) 100%)"></div>
<div class="a" style="left:110px;top:520px;width:642px;height:1px;background:rgba(235,245,255,0.8)"></div><div class="a" style="left:110px;top:521px;width:642px;height:1px;background:#5a6878"></div>
<svg class="a" style="left:110px;top:499px" width="16" height="14" viewBox="0 0 16 14">
<defs><linearGradient id="cg" x1="0" y1="0" x2="1" y2="1"><stop offset="0" stop-color="#3060a8"/><stop offset="0.5" stop-color="#3a8a98"/><stop offset="1" stop-color="#50b060"/></linearGradient><linearGradient id="cg2" x1="0" y1="0" x2="0" y2="1"><stop offset="0" stop-color="#2858a8"/><stop offset="1" stop-color="#50b060"/></linearGradient></defs>
<path d="M0.5 0.5h14a1 1 0 0 1 1 1v11a1 1 0 0 1-1 1h-14z" fill="#fcfcfc" stroke="#808488" stroke-width="1"/>
<rect x="0.5" y="0.5" width="15" height="1.5" fill="#808488"/><rect x="0.5" y="12" width="15" height="1.5" fill="#808488"/>
<rect x="2" y="3" width="5" height="7.5" fill="url(#cg)"/>
<rect x="8.5" y="9" width="2.5" height="1.5" fill="#c8c8c8"/>
<rect x="12.5" y="3" width="1.2" height="4" rx="0.6" fill="url(#cg2)"/>
</svg>
<div class="a" style="left:132px;top:499px;font-size:12.3px;color:#000">Untitled</div>
<div class="a" style="left:649px;top:493px;width:103px;height:19px;border:1px solid #52606a;border-top:none;border-radius:0 0 5px 5px;background:linear-gradient(#dfe8f2,#b8c8d8)"></div>
<div class="a" style="left:676px;top:493px;width:1px;height:18px;background:#52606a"></div>
<div class="a" style="left:703px;top:493px;width:1px;height:18px;background:#52606a"></div>
<div class="a" style="left:704px;top:493px;width:48px;height:18px;border-radius:0 0 5px 0;background:linear-gradient(#e8a090 0%,#d05040 50%,#b83020 51%,#c84838 100%)"></div>
<svg class="a" style="left:649px;top:493px" width="104" height="20" viewBox="0 0 104 20">
<rect x="9.5" y="9.5" width="11" height="4" rx="1" fill="#fff" stroke="#3a4048" stroke-width="1"/>
<rect x="36.5" y="4.5" width="11" height="9" fill="none" stroke="#98a8b8" stroke-width="1"/><rect x="38.5" y="7.5" width="7" height="3" fill="none" stroke="#98a8b8" stroke-width="1"/>
<path d="M75.5 5L84.5 13M84.5 5L75.5 13" stroke="#602828" stroke-width="4.4" stroke-linecap="round"/><path d="M75.5 5L84.5 13M84.5 5L75.5 13" stroke="#fff" stroke-width="2.4" stroke-linecap="round"/>
</svg>
<div class="a" style="left:111px;top:522px;width:641px;height:400px;background:#000;overflow:hidden">
  <div class="a con" style="left:0;top:1px"><div>bye or quit -- exit</div><div>help        -- show this screen</div><div>clear       -- clear variables</div><div>edit        -- edit current program</div><div>list        -- show source</div><div>list vars   -- show variables</div><div>load        -- load program from disk</div><div>new         -- clear program in memory</div><div>reload      -- reload program from disk</div><div>run         -- run program in memory</div><div>save        -- save program to disk</div><div>&nbsp;</div><div>cls         -- clear screen</div><div>tron        -- tracing on</div><div>troff       -- tracing off</div><div>ston        -- stepping on</div><div>stoff       -- stepping off</div><div>&gt; load</div></div>
</div>

</body></html>
